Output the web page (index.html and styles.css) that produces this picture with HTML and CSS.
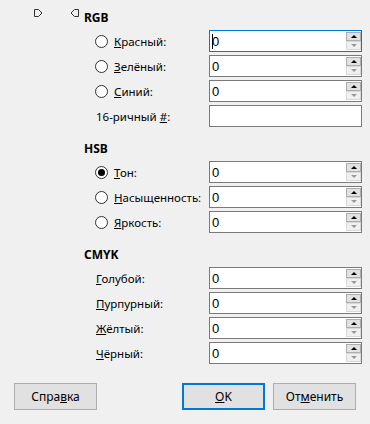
FILE: index.html
```html
<!DOCTYPE html>
<html lang="ru">
<head>
<meta charset="utf-8">
<link rel="stylesheet" href="styles.css">
</head>
<body>
<div class="dialog">
  <div class="content">
    <section class="group first">
      <div class="group-head">
        <span class="markers">
          <svg class="marker" width="9" height="8" viewBox="0 0 9 8"><path d="M0.5 0.5 H4.5 L8 4 L4.5 7.5 H0.5 Z" fill="none" stroke="#333" stroke-width="1"/></svg>
          <svg class="marker" width="9" height="8" viewBox="0 0 9 8"><path d="M8.5 0.5 H4.5 L1 4 L4.5 7.5 H8.5 Z" fill="none" stroke="#333" stroke-width="1"/></svg>
        </span>
        <h2 class="title">RGB</h2>
      </div>
      <div class="rows">
        <div class="lab"><span class="radio"></span><span><u>К</u>расный:</span></div>
        <div class="field focus"><span class="caret"></span><span class="val">0</span><span class="spin"><span class="up"></span><span class="down"></span></span></div>
        <div class="lab"><span class="radio"></span><span><u>З</u>елёный:</span></div>
        <div class="field"><span class="val">0</span><span class="spin"><span class="up"></span><span class="down"></span></span></div>
        <div class="lab"><span class="radio"></span><span><u>С</u>иний:</span></div>
        <div class="field"><span class="val">0</span><span class="spin"><span class="up"></span><span class="down"></span></span></div>
        <div class="lab plain"><span>16-ричный <u>#</u>:</span></div>
        <div class="field"><span class="val"></span></div>
      </div>
    </section>
    <section class="group">
      <div class="group-head"><h2 class="title">HSB</h2></div>
      <div class="rows">
        <div class="lab"><span class="radio on"></span><span><u>Т</u>он:</span></div>
        <div class="field"><span class="val">0</span><span class="spin"><span class="up"></span><span class="down"></span></span></div>
        <div class="lab"><span class="radio"></span><span><u>Н</u>асыщенность:</span></div>
        <div class="field"><span class="val">0</span><span class="spin"><span class="up"></span><span class="down"></span></span></div>
        <div class="lab"><span class="radio"></span><span><u>Я</u>ркость:</span></div>
        <div class="field"><span class="val">0</span><span class="spin"><span class="up"></span><span class="down"></span></span></div>
      </div>
    </section>
    <section class="group">
      <div class="group-head"><h2 class="title">CMYK</h2></div>
      <div class="rows">
        <div class="lab plain"><span><u>Г</u>олубой:</span></div>
        <div class="field"><span class="val">0</span><span class="spin"><span class="up"></span><span class="down"></span></span></div>
        <div class="lab plain"><span><u>П</u>урпурный:</span></div>
        <div class="field"><span class="val">0</span><span class="spin"><span class="up"></span><span class="down"></span></span></div>
        <div class="lab plain"><span><u>Ж</u>ёлтый:</span></div>
        <div class="field"><span class="val">0</span><span class="spin"><span class="up"></span><span class="down"></span></span></div>
        <div class="lab plain"><span><u>Ч</u>ёрный:</span></div>
        <div class="field"><span class="val">0</span><span class="spin"><span class="up"></span><span class="down"></span></span></div>
      </div>
    </section>
  </div>
  <div class="buttons">
    <button class="btn">Спра<u>в</u>ка</button>
    <div class="btn-group">
      <button class="btn default"><u>O</u>K</button>
      <button class="btn">От<u>м</u>енить</button>
    </div>
  </div>
</div>
</body>
</html>
```
FILE: styles.css
```css
html, body {
  margin: 0;
  padding: 0;
  background: #f0f0f0;
}
body {
  font-family: "Noto Sans", "Liberation Sans", sans-serif;
  font-size: 12px;
  color: #000;
  width: 370px;
  height: 424px;
  overflow: hidden;
}
.dialog {
  display: flex;
  flex-direction: column;
}
.content {
  padding: 10px 8px 0 84px;
  display: flex;
  flex-direction: column;
  gap: 14px;
}
.group-head {
  display: flex;
  align-items: flex-start;
  height: 16px;
  margin-bottom: 4px;
}
.first .group-head {
  margin-left: -50px;
}
.markers {
  display: flex;
  gap: 27px;
  margin-top: -1px;
  margin-right: 5px;
}
.marker {
  display: block;
}
.title {
  margin: 0;
  font-size: 12px;
  font-weight: bold;
  line-height: 16px;
}
.rows {
  display: grid;
  grid-template-columns: 114px 153px;
  grid-auto-rows: 22px;
  row-gap: 3px;
  margin-left: 11px;
}
.lab {
  display: flex;
  align-items: center;
  gap: 6px;
  white-space: nowrap;
  font-size: 11.5px;
}
.lab.plain {
  padding-left: 1px;
}
.radio {
  width: 11px;
  height: 11px;
  border: 1px solid #333;
  border-radius: 50%;
  background: #fff;
  display: flex;
  align-items: center;
  justify-content: center;
  flex: none;
}
.radio.on::after {
  content: "";
  width: 7px;
  height: 7px;
  border-radius: 50%;
  background: #000;
}
.field {
  border: 1px solid #7a7a7a;
  background: #fff;
  display: flex;
  align-items: center;
  position: relative;
  box-sizing: border-box;
}
.field.focus {
  border-color: #0078d7;
}
.val {
  flex: 1;
  font-family: "Liberation Sans", Arial, sans-serif;
  font-size: 13px;
  padding-left: 2px;
}
.caret {
  position: absolute;
  left: 2px;
  top: 3px;
  width: 1px;
  height: 15px;
  background: #000;
}
.spin {
  display: flex;
  flex-direction: column;
  align-self: stretch;
  padding: 1px 0;
  width: 15px;
}
.spin span {
  flex: 1;
  box-sizing: border-box;
  display: flex;
  align-items: center;
  justify-content: center;
}
.spin .up {
  border: 1px solid #adadad;
  background: #e1e1e1;
}
.spin .down {
  border: 1px solid #d9d9d9;
  background: #f0f0f0;
}
.spin .up::after {
  content: "";
  border-left: 3px solid transparent;
  border-right: 3px solid transparent;
  border-bottom: 3px solid #000;
}
.spin .down::after {
  content: "";
  border-left: 3px solid transparent;
  border-right: 3px solid transparent;
  border-top: 3px solid #9a9a9a;
}
.buttons {
  display: flex;
  padding: 19px 14px 0 14px;
}
.btn-group {
  margin-left: auto;
  display: flex;
  gap: 8px;
}
.btn {
  width: 83px;
  height: 27px;
  border: 1px solid #adadad;
  background: #e1e1e1;
  font-family: "Noto Sans", "Liberation Sans", sans-serif;
  font-size: 12px;
  color: #000;
  padding: 0;
  margin: 0;
}
.btn.default {
  border: 2px solid #0078d7;
}
```
